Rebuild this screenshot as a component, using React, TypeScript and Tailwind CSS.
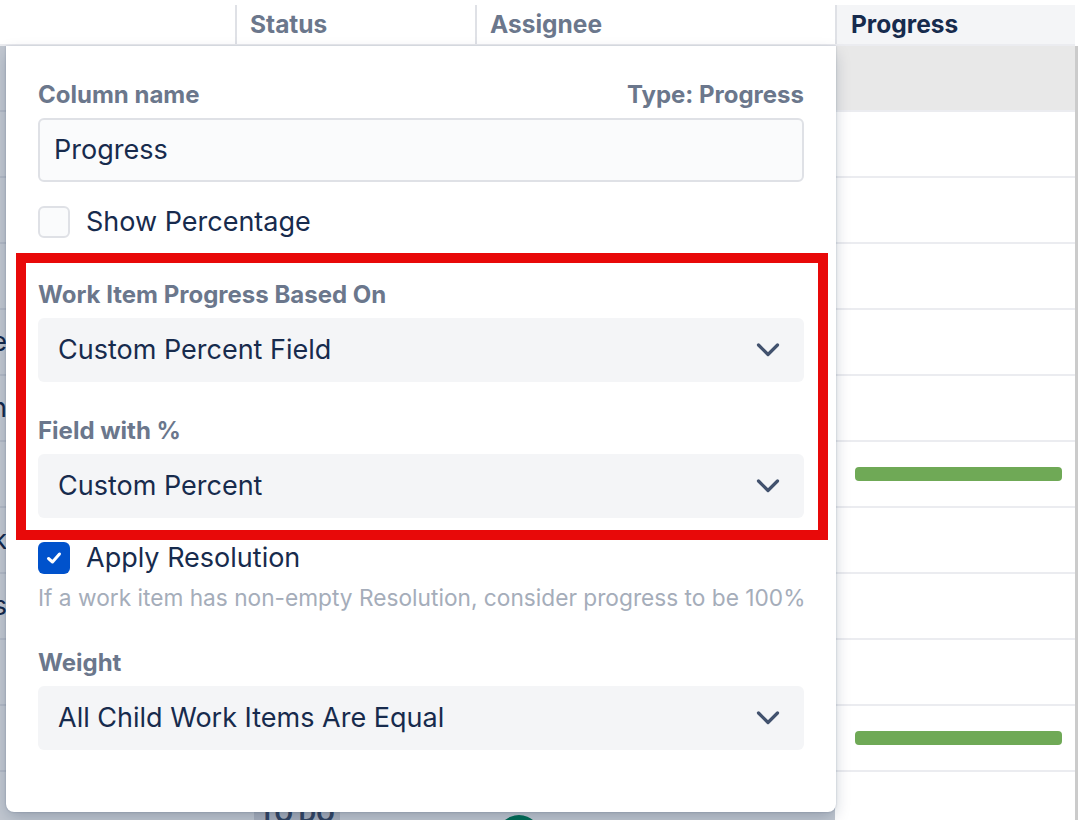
import React from "react";

const tails: Record<number, string> = {
  4: "Update the page",
  5: "Design review session",
  7: "Fix the broken link",
  8: "Collect sales figures",
};

const Chevron = () => (
  <svg width="24" height="16" viewBox="0 0 24 16" fill="none">
    <path d="M2.5 3 L12 12.5 L21.5 3" stroke="#42526e" strokeWidth="3.2" strokeLinecap="round" strokeLinejoin="round" />
  </svg>
);

const Select = ({ value }: { value: string }) => (
  <div className="mt-[9px] flex h-[64px] items-center justify-between rounded-md bg-[#f4f5f7] pl-5 pr-6 text-[27px]">
    <span>{value}</span>
    <Chevron />
  </div>
);

const Label = ({ children }: { children: React.ReactNode }) => (
  <div className="text-[24px] font-bold leading-[28px] text-[#6b778c]">{children}</div>
);

const App = () => {
  return (
    <div className="relative h-[820px] w-[1078px] overflow-hidden bg-white font-['Inter',sans-serif] text-[#172b4d]">
      {/* table behind the popup */}
      <div className="flex">
        <div className="w-[1075px]">
          <div className="grid h-[46px] grid-cols-[235px_240px_360px_240px] border-b-2 border-[#ebecf0] pt-[5px] text-[24.5px] font-bold">
            <div />
            <div className="flex items-center border-l-2 border-[#dfe1e6] pl-[13px] text-[#6b778c]">Status</div>
            <div className="flex items-center border-l-2 border-[#dfe1e6] pl-[13px] text-[#6b778c]">Assignee</div>
            <div className="flex items-center border-l-2 border-[#dfe1e6] bg-[#f4f5f7] pl-[14px]">Progress</div>
          </div>
          {Array.from({ length: 12 }).map((_, i) => (
            <div key={i} className="grid h-[66px] grid-cols-[235px_240px_360px_240px] border-b-2 border-[#ebecf0]">
              <div className="flex items-center">
                {tails[i] && (
                  <div className="flex w-[7px] justify-end overflow-hidden whitespace-nowrap text-[27px]">
                    <span>{tails[i]}</span>
                  </div>
                )}
              </div>
              <div className="pl-[19px]">
                {i === 11 && (
                  <div className="mt-[22px] inline-flex h-[40px] w-[86px] items-center justify-center rounded bg-[#dfe1e6] text-[24px] font-bold text-[#42526e]">
                    TO DO
                  </div>
                )}
              </div>
              <div className="flex items-start gap-[18px] pl-[22px]">
                {i === 11 && (
                  <>
                    <div className="mt-[43px] h-[44px] w-[44px] rounded-full bg-[#00875a]" />
                    <span className="mt-[40px] text-[27px] text-[#0052cc]">Saul Goodman</span>
                  </>
                )}
              </div>
              <div className={`flex items-center pl-5 ${i === 0 ? "bg-[#e8e8e8]" : ""}`}>
                {(i === 6 || i === 10) && <div className="h-[14px] w-[207px] rounded-[4px] bg-[#6fa956]" />}
              </div>
            </div>
          ))}
        </div>
        <div className="mt-[46px] h-[774px] w-[3px] bg-[#cbcbcb]" />
      </div>

      {/* dim overlay */}
      <div className="absolute left-0 top-[46px] h-[774px] w-[835px] bg-[#091e42]/25" />

      {/* column settings popup */}
      <div className="absolute left-[6px] top-[46px] h-[766px] w-[830px] rounded-b-lg bg-white px-8 pt-[35px] shadow-[0_6px_16px_-2px_rgba(9,30,66,0.25),0_0_2px_rgba(9,30,66,0.25)]">
        <div className="flex justify-between">
          <Label>Column name</Label>
          <Label>Type: Progress</Label>
        </div>
        <div className="mt-[9px] flex h-[64px] items-center rounded-md border-2 border-[#dfe1e6] bg-[#fafbfc] px-[14px] text-[27px]">
          Progress
        </div>
        <div className="mt-6 flex h-8 items-center gap-4 text-[27px]">
          <div className="h-8 w-8 shrink-0 rounded-md border-2 border-[#dfe1e6] bg-[#fafbfc]" />
          <span>Show Percentage</span>
        </div>

        <div className="mt-[43px]">
          <Label>Work Item Progress Based On</Label>
        </div>
        <Select value="Custom Percent Field" />
        <div className="mt-[35px]">
          <Label>Field with %</Label>
        </div>
        <Select value="Custom Percent" />

        <div className="mt-6 flex h-8 items-center gap-4 text-[27px]">
          <div className="flex h-8 w-8 shrink-0 items-center justify-center rounded-md bg-[#0052cc]">
            <svg width="16" height="14" viewBox="0 0 16 14" fill="none">
              <path d="M2.5 7.5 L6.5 11 L13.5 3" stroke="white" strokeWidth="3" strokeLinecap="round" strokeLinejoin="round" />
            </svg>
          </div>
          <span>Apply Resolution</span>
        </div>
        <div className="mt-3 whitespace-nowrap text-[22.7px] leading-6 text-[#a5adba]">
          If a work item has non-empty Resolution, consider progress to be 100%
        </div>

        <div className="mt-[39px]">
          <Label>Weight</Label>
        </div>
        <Select value="All Child Work Items Are Equal" />

        {/* highlight annotation */}
        <div className="absolute left-[10px] top-[207px] h-[287px] w-[812px] border-[10px] border-[#e80909]" />
      </div>
    </div>
  );
};

export default App;
